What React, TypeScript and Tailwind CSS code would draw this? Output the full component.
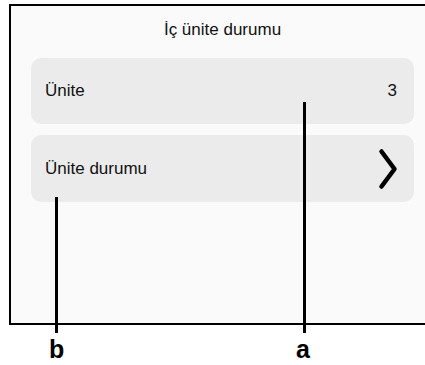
import React from 'react';

const font = { fontFamily: '"Liberation Sans", Arial, sans-serif' };

const Chevron: React.FC = () => (
  <svg width="20" height="42" viewBox="0 0 20 42" fill="none">
    <path d="M3.5 3.5 L16.5 21 L3.5 38.5" stroke="#000" strokeWidth="4.5" strokeLinecap="round" strokeLinejoin="round" />
  </svg>
);

export default function App() {
  return (
    <div className="relative w-[425px] h-[365px] bg-white overflow-hidden" style={font}>
      {/* Screen frame */}
      <div className="ml-[9px] mt-[4px] h-[321px] border-l-2 border-t-2 border-b-2 border-black bg-[#fafafa] flex flex-col pl-[20px] pr-[11px]">
        <div className="h-[46px] flex items-center justify-center text-[17px] text-[#111] pt-[2px]">
          İç ünite durumu
        </div>
        <div className="mt-[6px] h-[66px] rounded-[10px] bg-[#ebebeb] flex items-center justify-between pl-[14px] pr-[17px] text-[17px] text-[#111]">
          <span>Ünite</span>
          <span>3</span>
        </div>
        <div className="mt-[11px] h-[67px] rounded-[10px] bg-[#ebebeb] flex items-center justify-between pl-[14px] pr-[16px] text-[17px] text-[#111]">
          <span>Ünite durumu</span>
          <Chevron />
        </div>
      </div>

      {/* Callout lines */}
      <div className="absolute left-[303px] top-[102px] w-[3px] h-[231px] bg-black" />
      <div className="absolute left-[55px] top-[197px] w-[3px] h-[136px] bg-black" />

      {/* Callout labels */}
      <div className="absolute left-[49px] top-[337px] text-[25px] font-bold text-black leading-none">b</div>
      <div className="absolute left-[296px] top-[337px] text-[25px] font-bold text-black leading-none">a</div>
    </div>
  );
}
